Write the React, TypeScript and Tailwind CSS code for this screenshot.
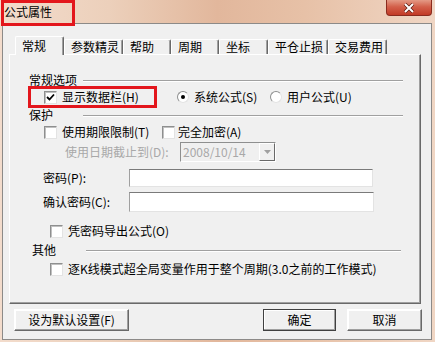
import React from 'react';

const font = { fontFamily: '"Noto Sans CJK SC", "Liberation Sans", sans-serif' };

function CheckBox({ checked = false }: { checked?: boolean }) {
  return (
    <span className="relative inline-block w-[13px] h-[13px] shrink-0 bg-white border border-t-[#8e8f8f] border-l-[#8e8f8f] border-r-[#e3e3e3] border-b-[#e3e3e3] shadow-[inset_1px_1px_0_#c0c0c0]">
      {checked && (
        <svg viewBox="0 0 11 11" className="absolute left-0 top-0 w-[11px] h-[11px]">
          <path d="M2 5 L4.5 7.5 L9 2.5" stroke="#000" strokeWidth="1.8" fill="none" />
        </svg>
      )}
    </span>
  );
}

function Radio({ on = false }: { on?: boolean }) {
  return (
    <span className="relative inline-flex items-center justify-center w-[12px] h-[12px] shrink-0 rounded-full bg-white border border-t-[#8e8f8f] border-l-[#8e8f8f] border-r-[#e3e3e3] border-b-[#e3e3e3]">
      {on && <span className="w-[4px] h-[4px] rounded-full bg-black" />}
    </span>
  );
}

function Header({ label }: { label: string }) {
  return (
    <div className="flex items-center h-[14px] pl-[19px] pr-[17px]">
      <span className="w-[54px]">{label}</span>
      <div className="flex-1 border-t border-[#a0a0a0] shadow-[0_1px_0_#ffffff]" />
    </div>
  );
}

function Tab({ label, w, active = false }: { label: string; w: number; active?: boolean }) {
  const base =
    'flex items-center pl-[6px] shrink-0 rounded-t-[2px] border-t border-l border-r border-t-white border-l-white border-r-[#696969] shadow-[inset_-1px_0_0_#a0a0a0]';
  return (
    <div
      className={
        active
          ? `${base} relative z-10 h-[19px] bg-[#f0f0f0]`
          : `${base} h-[15px] mb-[1px] bg-[#f0f0f0]`
      }
      style={{ width: w }}
    >
      {label}
    </div>
  );
}

function Btn({ label, w, def = false }: { label: string; w: number; def?: boolean }) {
  return (
    <div
      className={`flex items-center justify-center h-[22px] bg-[#f0f0f0] border ${
        def ? 'border-[#404040]' : 'border-t-white border-l-white border-r-[#696969] border-b-[#696969]'
      } shadow-[inset_-1px_-1px_0_#a0a0a0,inset_1px_1px_0_#ffffff]`}
      style={{ width: w }}
    >
      {label}
    </div>
  );
}

export default function App() {
  return (
    <div
      className="relative w-[435px] h-[342px] overflow-hidden text-[12px] leading-[14px] text-black bg-[linear-gradient(90deg,#f3dccc_0%,#ecd0bb_25%,#e2b79c_50%,#e7c1a7_70%,#f0d6c4_100%)]"
      style={font}
    >
      {/* Title bar */}
      <div className="flex justify-between h-[23px]">
        <div className="pl-[4px] pt-[5px]">公式属性</div>
        <div className="mr-[3px] w-[46px] h-[16px] flex items-center justify-center rounded-b-[4px] border border-t-0 border-[#8a2b1e] bg-[linear-gradient(180deg,#e49a85_0%,#d3604a_45%,#c23a26_100%)]">
          <svg viewBox="0 0 12 10" className="w-[12px] h-[10px]">
            <path d="M2 1 L10 9 M10 1 L2 9" stroke="#5a1a10" strokeWidth="3.4" />
            <path d="M2 1 L10 9 M10 1 L2 9" stroke="#ffffff" strokeWidth="2" />
          </svg>
        </div>
      </div>

      {/* Client area */}
      <div className="ml-[2px] w-[430px] h-[317px] bg-[#f0f0f0] border border-[#8c8a88]">
        <div className="flex items-end pt-[12px] pl-[12px] h-[31px]">
          <Tab label="常规" w={49} active />
          <Tab label="参数精灵" w={59} />
          <Tab label="帮助" w={48} />
          <Tab label="周期" w={48} />
          <Tab label="坐标" w={49} />
          <Tab label="平仓止损" w={60} />
          <Tab label="交易费用" w={59} />
        </div>

        <div className="ml-[6px] mt-[-1px] w-[412px] h-[250px] border border-t-white border-l-white border-r-[#696969] border-b-[#696969] shadow-[inset_-1px_-1px_0_#a0a0a0] pt-[18px]">
          <Header label="常规选项" />
          <div className="flex items-center h-[20px] pl-[34px]">
            <div className="flex items-center gap-[5px] w-[133px]">
              <CheckBox checked />
              <span>显示数据栏(H)</span>
            </div>
            <div className="flex items-center gap-[5px] w-[93px]">
              <Radio on />
              <span>系统公式(S)</span>
            </div>
            <div className="flex items-center gap-[5px]">
              <Radio />
              <span>用户公式(U)</span>
            </div>
          </div>

          <div className="mt-[1px]">
            <Header label="保护" />
          </div>
          <div className="flex items-center h-[20px] pl-[34px]">
            <div className="flex items-center gap-[5px] w-[118px]">
              <CheckBox />
              <span>使用期限限制(T)</span>
            </div>
            <div className="flex items-center gap-[3px]">
              <CheckBox />
              <span>完全加密(A)</span>
            </div>
          </div>

          <div className="flex items-center h-[20px] pl-[55px]">
            <span className="w-[115px] text-[#a8a8a8]">使用日期截止到(D):</span>
            <div className="flex items-center w-[96px] h-[20px] bg-[#f0f0f0] border border-t-[#8e8f8f] border-l-[#8e8f8f] border-r-white border-b-white">
              <span className="flex-1 pl-[2px] text-[#a8a8a8]">2008/10/14</span>
              <div className="flex items-center justify-center w-[16px] h-[18px] border border-t-white border-l-white border-r-[#696969] border-b-[#696969]">
                <svg viewBox="0 0 7 4" className="w-[7px] h-[4px]">
                  <path d="M0 0 L7 0 L3.5 4 Z" fill="#a0a0a0" />
                </svg>
              </div>
            </div>
          </div>

          <div className="flex items-center h-[18px] mt-[7px] pl-[33px]">
            <span className="w-[86px]">密码(P):</span>
            <div className="w-[244px] h-[18px] bg-white border border-t-[#7a7a7a] border-l-[#a0a0a0] border-r-[#e3e3e3] border-b-[#e3e3e3]" />
          </div>

          <div className="flex items-center h-[20px] mt-[5px] pl-[33px]">
            <span className="w-[86px]">确认密码(C):</span>
            <div className="w-[245px] h-[20px] bg-white border border-t-[#7a7a7a] border-l-[#a0a0a0] border-r-[#e3e3e3] border-b-[#e3e3e3]" />
          </div>

          <div className="flex items-center gap-[5px] h-[20px] mt-[9px] pl-[40px]">
            <CheckBox />
            <span>凭密码导出公式(O)</span>
          </div>

          <div className="mt-[2px] [&>div]:pl-[22px] [&>div]:pr-[19px]">
            <Header label="其他" />
          </div>

          <div className="flex items-center gap-[5px] h-[20px] mt-[2px] pl-[40px]">
            <CheckBox />
            <span>逐K线模式超全局变量作用于整个周期(3.0之前的工作模式)</span>
          </div>
        </div>

        <div className="flex mt-[5px] pl-[11px] pr-[9px]">
          <Btn label="设为默认设置(F)" w={115} />
          <div className="ml-auto flex gap-[11px]">
            <Btn label="确定" w={73} def />
            <Btn label="取消" w={75} />
          </div>
        </div>
      </div>

      {/* Red highlight marks */}
      <div className="absolute left-[1px] top-0 w-[74px] h-[26px] border-[3px] border-[#e3161c]" />
      <div className="absolute left-[28px] top-[86px] w-[129px] h-[22px] border-[3px] border-[#e3161c]" />
    </div>
  );
}
